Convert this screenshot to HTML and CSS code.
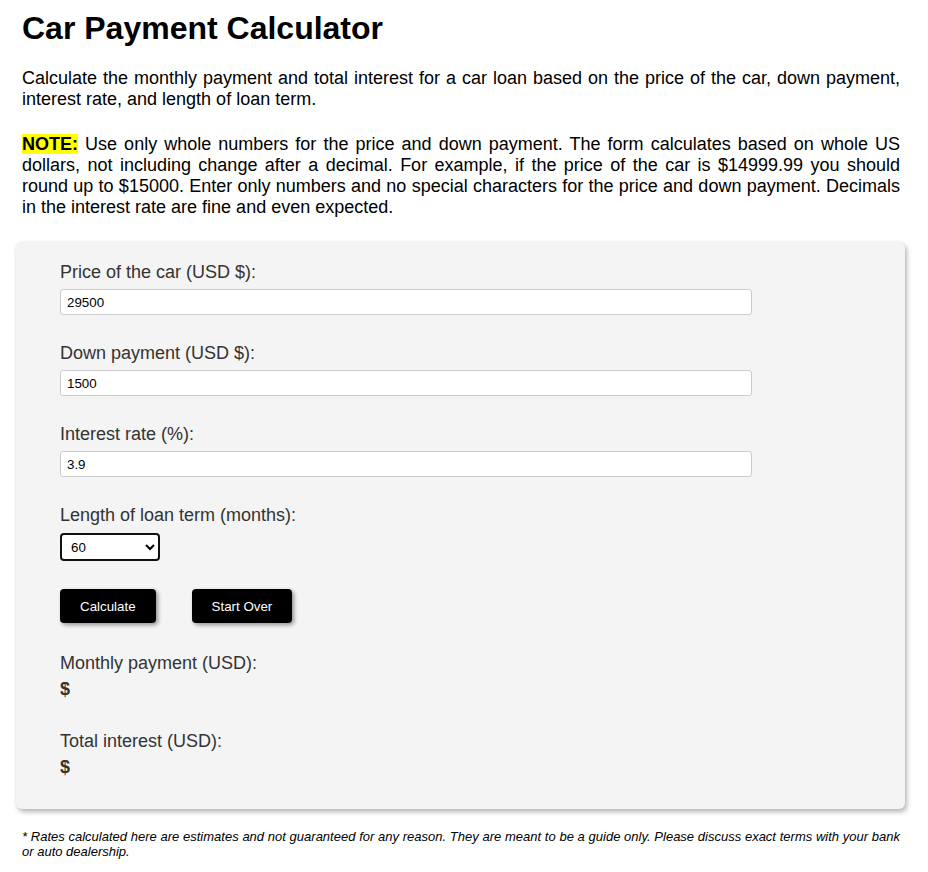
FILE: index.html
```html
<!DOCTYPE html>
<html>
<head>
    <title>Car Payment Calculator</title>
    <link rel="stylesheet" href="styles.css">
</head>
<body>
    <div class="page">
        <h1 class="text">Car Payment Calculator</h1>
        <p class="text intro">Calculate the monthly payment and total interest for a car loan based on the price of the car, down payment, interest rate, and length of loan term.</p>
        <p class="text intro"><span class="note">NOTE:</span> Use only whole numbers for the price and down payment. The form calculates based on whole US dollars, not including change after a decimal. For example, if the price of the car is $14999.99 you should round up to $15000. Enter only numbers and no special characters for the price and down payment. Decimals in the interest rate are fine and even expected.</p>

        <div class="calculator">
            <form id="car-form">
                <div class="field">
                    <label for="price">Price of the car (USD $):</label>
                    <input type="text" id="price" value="29500">
                </div>
                <div class="field">
                    <label for="down">Down payment (USD $):</label>
                    <input type="text" id="down" value="1500">
                </div>
                <div class="field">
                    <label for="rate">Interest rate (%):</label>
                    <input type="text" id="rate" value="3.9">
                </div>
                <div class="field field-term">
                    <label for="term">Length of loan term (months):</label>
                    <select id="term">
                        <option>12</option>
                        <option>24</option>
                        <option>36</option>
                        <option>48</option>
                        <option selected>60</option>
                        <option>72</option>
                        <option>84</option>
                    </select>
                </div>
                <div class="actions">
                    <button type="button" onclick="calculate()">Calculate</button>
                    <button type="button" onclick="startOver()">Start Over</button>
                </div>
                <div class="result">
                    <div class="result-label">Monthly payment (USD):</div>
                    <div class="result-value">$<span id="monthly"></span></div>
                </div>
                <div class="result">
                    <div class="result-label">Total interest (USD):</div>
                    <div class="result-value">$<span id="interest"></span></div>
                </div>
            </form>
        </div>

        <p class="text disclaimer">* Rates calculated here are estimates and not guaranteed for any reason. They are meant to be a guide only. Please discuss exact terms with your bank or auto dealership.</p>
    </div>

    <script>
        function calculate() {
            // Read the form values
            var price = parseInt(document.getElementById("price").value);
            var down = parseInt(document.getElementById("down").value);
            var rate = parseFloat(document.getElementById("rate").value) / 100 / 12;
            var months = parseInt(document.getElementById("term").value);
            var loan = price - down;

            // Standard amortized payment
            var payment = rate > 0 ? loan * rate / (1 - Math.pow(1 + rate, -months)) : loan / months;
            document.getElementById("monthly").innerText = payment.toFixed(2);
            document.getElementById("interest").innerText = (payment * months - loan).toFixed(2);
        }

        function startOver() {
            document.getElementById("car-form").reset();
            document.getElementById("monthly").innerText = "";
            document.getElementById("interest").innerText = "";
        }
    </script>
</body>
</html>
```

FILE: styles.css
```css
/* Global styles */
body {
    margin: 0;
    font-family: Arial, "Liberation Sans", sans-serif;
    color: #000;
    background-color: #fff;
}

.page {
    width: 889px;
    padding-left: 16px;
}

.text {
    margin-left: 6px;
    margin-right: 5px;
}

h1 {
    font-size: 32px;
    line-height: 37px;
    margin-top: 10px;
    margin-bottom: 21px;
}

.intro {
    font-size: 18px;
    line-height: 21px;
    text-align: justify;
    margin-top: 21px;
    margin-bottom: 24px;
}

.note {
    font-weight: bold;
    background-color: #ff0;
}

/* Calculator box */
.calculator {
    padding: 20px 44px 31px;
    background-color: #f4f4f4;
    border-radius: 6px;
    box-shadow: 2px 3px 5px rgba(0, 0, 0, 0.28), 0 0 3px rgba(0, 0, 0, 0.06);
}

.field {
    margin-bottom: 28px;
}

.field label,
.result-label {
    display: block;
    font-size: 18px;
    line-height: 21px;
    color: #333;
}

.field label {
    margin-bottom: 6px;
}

.field input {
    display: block;
    box-sizing: border-box;
    width: 692px;
    height: 26px;
    padding: 0 6px;
    border: 1px solid #ccc;
    border-radius: 3px;
    background-color: #fff;
    font-family: Arial, "Liberation Sans", sans-serif;
    font-size: 13.33px;
    color: #000;
}

.field-term label {
    margin-bottom: 7px;
}

.field select {
    display: block;
    box-sizing: border-box;
    width: 100px;
    height: 28px;
    padding: 0 5px;
    border: 2px solid #111;
    border-radius: 4px;
    background-color: #fff;
    font-family: Arial, "Liberation Sans", sans-serif;
    font-size: 13.33px;
    color: #000;
}

/* Buttons */
.actions {
    display: flex;
    gap: 36px;
    margin-bottom: 30px;
}

.actions button {
    height: 34px;
    padding: 0 20px;
    border: none;
    border-radius: 4px;
    background-color: #000;
    color: #fff;
    font-family: Arial, "Liberation Sans", sans-serif;
    font-size: 13.33px;
    box-shadow: 2px 2px 4px rgba(0, 0, 0, 0.4);
    cursor: pointer;
}

/* Results */
.result {
    margin-bottom: 31px;
}

.result:last-child {
    margin-bottom: 0;
}

.result-value {
    margin-top: 5px;
    font-size: 18px;
    line-height: 21px;
    font-weight: bold;
    color: #333;
}

.disclaimer {
    margin-top: 20px;
    margin-bottom: 0;
    font-size: 13px;
    line-height: 15px;
    font-style: italic;
    text-align: justify;
}
```
